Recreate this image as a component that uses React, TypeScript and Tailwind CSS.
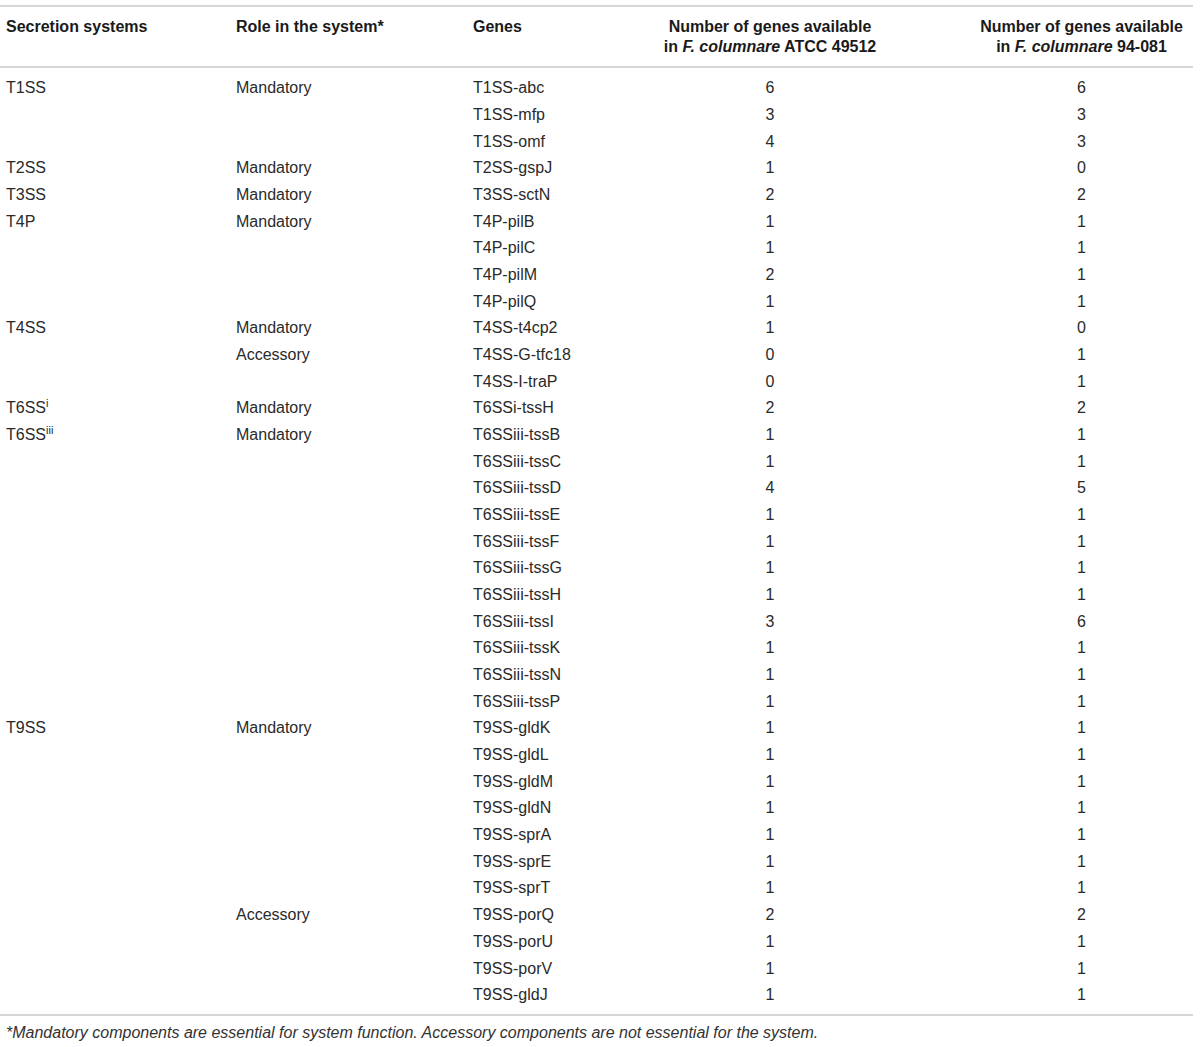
const rows: [string, string, string, number, number][] = [
  ["T1SS", "Mandatory", "T1SS-abc", 6, 6],
  ["", "", "T1SS-mfp", 3, 3],
  ["", "", "T1SS-omf", 4, 3],
  ["T2SS", "Mandatory", "T2SS-gspJ", 1, 0],
  ["T3SS", "Mandatory", "T3SS-sctN", 2, 2],
  ["T4P", "Mandatory", "T4P-pilB", 1, 1],
  ["", "", "T4P-pilC", 1, 1],
  ["", "", "T4P-pilM", 2, 1],
  ["", "", "T4P-pilQ", 1, 1],
  ["T4SS", "Mandatory", "T4SS-t4cp2", 1, 0],
  ["", "Accessory", "T4SS-G-tfc18", 0, 1],
  ["", "", "T4SS-I-traP", 0, 1],
  ["T6SS|i", "Mandatory", "T6SSi-tssH", 2, 2],
  ["T6SS|iii", "Mandatory", "T6SSiii-tssB", 1, 1],
  ["", "", "T6SSiii-tssC", 1, 1],
  ["", "", "T6SSiii-tssD", 4, 5],
  ["", "", "T6SSiii-tssE", 1, 1],
  ["", "", "T6SSiii-tssF", 1, 1],
  ["", "", "T6SSiii-tssG", 1, 1],
  ["", "", "T6SSiii-tssH", 1, 1],
  ["", "", "T6SSiii-tssI", 3, 6],
  ["", "", "T6SSiii-tssK", 1, 1],
  ["", "", "T6SSiii-tssN", 1, 1],
  ["", "", "T6SSiii-tssP", 1, 1],
  ["T9SS", "Mandatory", "T9SS-gldK", 1, 1],
  ["", "", "T9SS-gldL", 1, 1],
  ["", "", "T9SS-gldM", 1, 1],
  ["", "", "T9SS-gldN", 1, 1],
  ["", "", "T9SS-sprA", 1, 1],
  ["", "", "T9SS-sprE", 1, 1],
  ["", "", "T9SS-sprT", 1, 1],
  ["", "Accessory", "T9SS-porQ", 2, 2],
  ["", "", "T9SS-porU", 1, 1],
  ["", "", "T9SS-porV", 1, 1],
  ["", "", "T9SS-gldJ", 1, 1],
];

function SystemName({ name }: { name: string }) {
  const [base, sup] = name.split("|");
  return (
    <>
      {base}
      {sup && <span className="text-[11px] align-[6px] leading-none">{sup}</span>}
    </>
  );
}

const grid = "grid grid-cols-[236px_237px_187px_220px_1fr]";

export default function App() {
  return (
    <div className="bg-white w-[1200px] h-[1047px] text-[#2a2a2a] font-['Liberation_Sans',Arial,sans-serif]">
      <div className="h-[5px]" />
      <div className="w-[1193px] border-t-2 border-b-2 border-[#d6d6d6]">
        <div className={`${grid} pt-[10px] pb-[9px] text-[16px] font-bold leading-[20px] text-[#1a1a1a]`}>
          <div className="pl-[6px]">Secretion systems</div>
          <div>Role in the system*</div>
          <div>Genes</div>
          <div className="text-center">
            Number of genes available
            <br />
            in <i>F. columnare</i> ATCC 49512
          </div>
          <div className="text-center pl-[90px]">
            Number of genes available
            <br />
            in <i>F. columnare</i> 94-081
          </div>
        </div>
      </div>
      <div className="w-[1193px] border-b-2 border-[#d6d6d6] pt-[7px] pb-[5px] text-[16px]">
        {rows.map((r, i) => (
          <div key={i} className={`${grid} h-[26.68px] items-center`}>
            <div className="pl-[6px]">
              <SystemName name={r[0]} />
            </div>
            <div>{r[1]}</div>
            <div>{r[2]}</div>
            <div className="text-center">{r[3]}</div>
            <div className="text-center pl-[90px]">{r[4]}</div>
          </div>
        ))}
      </div>
      <div className="pl-[6px] pt-[5px] text-[16px] italic text-[#333]">
        *Mandatory components are essential for system function. Accessory components are not essential for the system.
      </div>
    </div>
  );
}
